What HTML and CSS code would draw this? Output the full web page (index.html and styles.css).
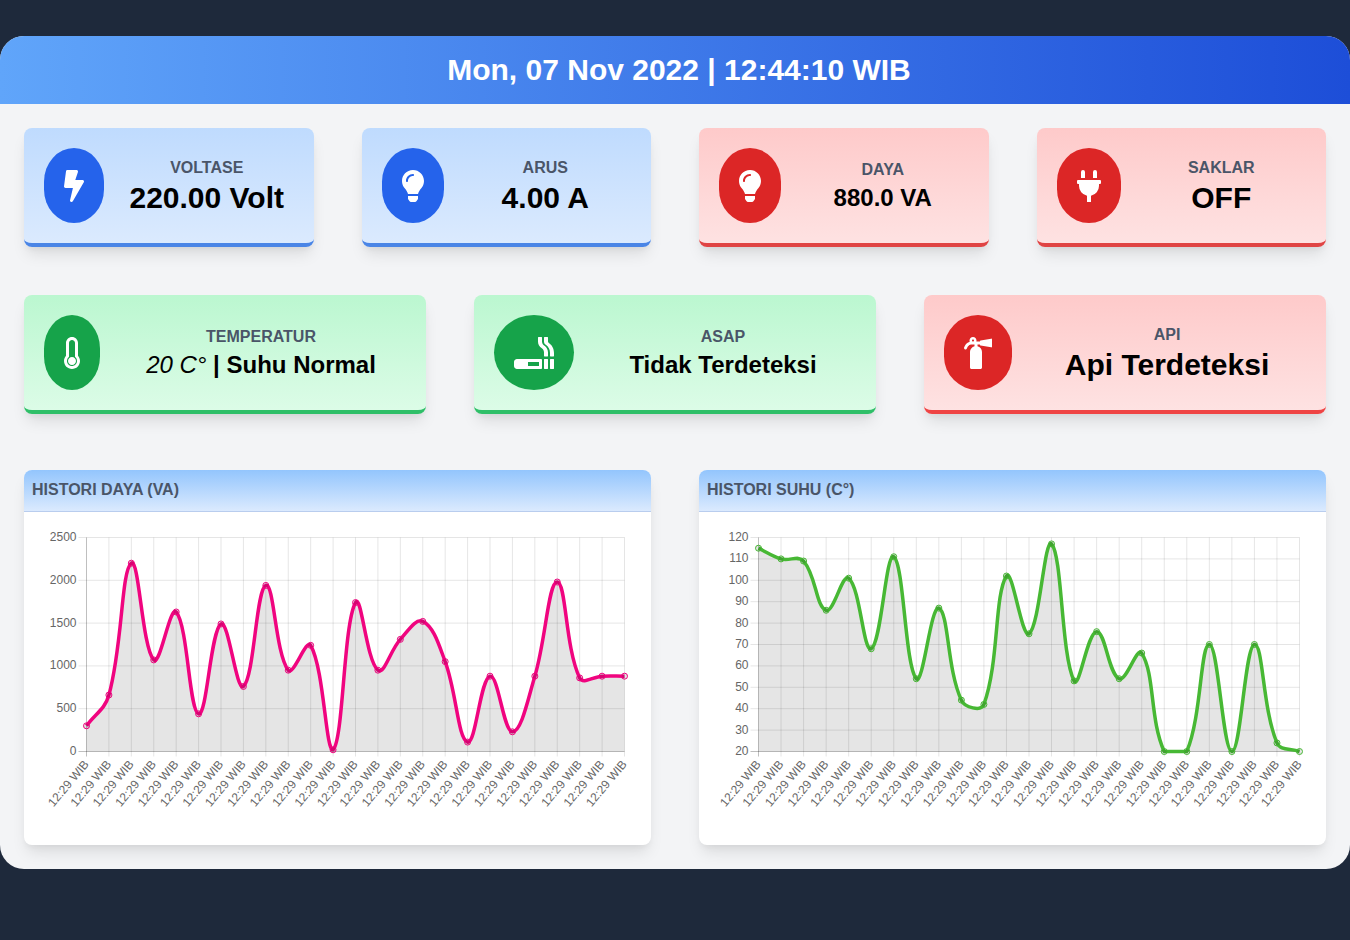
FILE: index.html
```html
<!DOCTYPE html>
<html lang="id">
<head>
    <meta charset="UTF-8">
    <meta name="viewport" content="width=device-width, initial-scale=1.0">
    <title>Monitoring Listrik</title>
    <link rel="stylesheet" href="styles.css">
</head>
<body>
    <div class="panel">
        <header class="topbar">Mon, 07 Nov 2022 | 12:44:10 WIB</header>
        <main class="content">
            <section class="row row-four">
                <div class="card card-blue">
                    <div class="icon icon-w60">
                        <svg viewBox="0 0 320 512" class="glyph"><path d="M296 160H180.6l42.6-129.8C227.2 15 215.7 0 200 0H56C44 0 33.8 8.9 32.2 20.8l-32 240C-1.7 275.2 9.5 288 24 288h118.7L96.6 482.5c-3.6 15.2 8 29.5 23.3 29.5 8.4 0 16.4-4.4 20.8-12l176-304c9.3-15.9-2.2-36-20.7-36z"/></svg>
                    </div>
                    <div class="info">
                        <h5 class="label">VOLTASE</h5>
                        <h3 class="value">220.00 Volt</h3>
                    </div>
                </div>
                <div class="card card-blue">
                    <div class="icon icon-w62">
                        <svg viewBox="0 0 352 512" class="glyph"><path d="M96.06 454.35c.01 6.29 1.87 12.45 5.36 17.69l17.09 25.69a31.99 31.99 0 0 0 26.64 14.28h61.71a31.99 31.99 0 0 0 26.64-14.28l17.09-25.69a31.989 31.989 0 0 0 5.36-17.69l.04-38.35H96.01l.05 38.35zM0 176c0 44.37 16.45 84.85 43.56 115.78 16.52 18.85 42.36 58.23 52.21 91.45.04.26.07.52.11.78h160.24c.04-.26.07-.51.11-.78 9.85-33.22 35.69-72.6 52.21-91.45C335.55 260.85 352 220.37 352 176 352 78.61 272.91-.3 175.45 0 73.44.31 0 82.97 0 176zm176-80c-44.11 0-80 35.89-80 80 0 8.84-7.16 16-16 16s-16-7.16-16-16c0-61.76 50.24-112 112-112 8.84 0 16 7.16 16 16s-7.16 16-16 16z"/></svg>
                    </div>
                    <div class="info">
                        <h5 class="label">ARUS</h5>
                        <h3 class="value">4.00 A</h3>
                    </div>
                </div>
                <div class="card card-red">
                    <div class="icon icon-w62">
                        <svg viewBox="0 0 352 512" class="glyph"><path d="M96.06 454.35c.01 6.29 1.87 12.45 5.36 17.69l17.09 25.69a31.99 31.99 0 0 0 26.64 14.28h61.71a31.99 31.99 0 0 0 26.64-14.28l17.09-25.69a31.989 31.989 0 0 0 5.36-17.69l.04-38.35H96.01l.05 38.35zM0 176c0 44.37 16.45 84.85 43.56 115.78 16.52 18.85 42.36 58.23 52.21 91.45.04.26.07.52.11.78h160.24c.04-.26.07-.51.11-.78 9.85-33.22 35.69-72.6 52.21-91.45C335.55 260.85 352 220.37 352 176 352 78.61 272.91-.3 175.45 0 73.44.31 0 82.97 0 176zm176-80c-44.11 0-80 35.89-80 80 0 8.84-7.16 16-16 16s-16-7.16-16-16c0-61.76 50.24-112 112-112 8.84 0 16 7.16 16 16s-7.16 16-16 16z"/></svg>
                    </div>
                    <div class="info">
                        <h5 class="label">DAYA</h5>
                        <h3 class="value value-sm">880.0 VA</h3>
                    </div>
                </div>
                <div class="card card-red">
                    <div class="icon icon-w64">
                        <svg viewBox="0 0 384 512" class="glyph"><path d="M320,32a32,32,0,0,0-64,0v96h64Zm48,128H16A16,16,0,0,0,0,176v32a16,16,0,0,0,16,16H32v32A160.07,160.07,0,0,0,160,412.8V512h64V412.8A160.07,160.07,0,0,0,352,256V224h16a16,16,0,0,0,16-16V176A16,16,0,0,0,368,160ZM128,32a32,32,0,0,0-64,0v96h64Z"/></svg>
                    </div>
                    <div class="info">
                        <h5 class="label">SAKLAR</h5>
                        <h3 class="value">OFF</h3>
                    </div>
                </div>
            </section>

            <section class="row row-three">
                <div class="card card-green">
                    <div class="icon icon-w56">
                        <svg viewBox="0 0 256 512" class="glyph"><path d="M192 384c0 35.346-28.654 64-64 64s-64-28.654-64-64 28.654-64 64-64 64 28.654 64 64zm32-84.653c19.912 22.563 32 52.194 32 84.653 0 70.696-57.303 128-128 128-.299 0-.609-.001-.909-.003C56.789 511.509-.357 453.636.002 383.333.166 351.135 12.225 321.755 32 299.347V96c0-53.019 42.981-96 96-96s96 42.981 96 96v203.347zM208 384c0-34.339-19.37-52.19-32-66.502V96c0-26.467-21.533-48-48-48S80 69.533 80 96v221.498c-12.732 14.428-31.825 32.1-31.999 66.08-.224 43.876 35.563 80.116 79.423 80.42L128 464c44.112 0 80-35.888 80-80z"/></svg>
                    </div>
                    <div class="info">
                        <h5 class="label">TEMPERATUR</h5>
                        <h3 class="value value-sm"><i class="value-temp">20 C°</i> | Suhu Normal</h3>
                    </div>
                </div>
                <div class="card card-green">
                    <div class="icon icon-w80">
                        <svg viewBox="0 0 640 512" class="glyph"><path d="M632 352h-48c-4.4 0-8 3.6-8 8v144c0 4.4 3.6 8 8 8h48c4.4 0 8-3.6 8-8V360c0-4.4-3.6-8-8-8zM553.3 87.1c-5.7-3.8-9.3-10-9.3-16.8V8c0-4.4-3.6-8-8-8h-48c-4.4 0-8 3.6-8 8v62.3c0 22 10.2 43.4 28.6 55.4 42.2 28.3 67.4 75.5 67.4 126.3V304c0 4.4 3.6 8 8 8h48c4.4 0 8-3.6 8-8v-48.3c0-69.7-34.5-134.5-92.7-168.6zM432 352H48c-26.5 0-48 21.5-48 48v64c0 26.5 21.5 48 48 48h384c8.8 0 16-7.2 16-16V368c0-8.8-7.2-16-16-16zm-32 112H224v-64h176v64zm87.7-322.4C463.8 125 448 99.3 448 70.3V8c0-4.4-3.6-8-8-8h-48c-4.4 0-8 3.6-8 8v66.4c0 43.7 24.6 81.6 60.3 106.7 22.4 15.7 35.7 41.2 35.7 68.6V304c0 4.4 3.6 8 8 8h48c4.4 0 8-3.6 8-8v-54.3c0-43.3-21-83.7-56.3-108.1zM536 352h-48c-4.4 0-8 3.6-8 8v144c0 4.4 3.6 8 8 8h48c4.4 0 8-3.6 8-8V360c0-4.4-3.6-8-8-8z"/></svg>
                    </div>
                    <div class="info">
                        <h5 class="label">ASAP</h5>
                        <h3 class="value value-sm">Tidak Terdeteksi</h3>
                    </div>
                </div>
                <div class="card card-fire">
                    <div class="icon icon-w68">
                        <svg viewBox="0 0 448 512" class="glyph"><path d="M434.027 26.329l-168 28C254.693 56.218 256 67.8 256 72h-58.332C208.353 36.108 181.446 0 144 0c-39.435 0-66.368 39.676-52.228 76.203-52.039 13.051-75.381 54.213-90.049 90.884-4.923 12.307 1.063 26.274 13.37 31.197 12.317 4.926 26.279-1.075 31.196-13.37C75.058 112.99 106.964 120 168 120v27.076c-41.543 10.862-72 49.235-72 94.129V488c0 13.255 10.745 24 24 24h144c13.255 0 24-10.745 24-24V240c0-44.731-30.596-82.312-72-92.97V120h40c0 2.974-1.703 15.716 10.027 17.671l168 28C441.342 169.531 448 163.33 448 156V38c0-7.33-6.658-13.531-13.973-11.671zM144 72c-8.822 0-16-7.178-16-16s7.178-16 16-16 16 7.178 16 16-7.178 16-16 16z"/></svg>
                    </div>
                    <div class="info">
                        <h5 class="label">API</h5>
                        <h3 class="value">Api Terdeteksi</h3>
                    </div>
                </div>
            </section>

            <section class="row row-two">
                <div class="chart-card">
                    <h5 class="chart-title">HISTORI DAYA (VA)</h5>
                    <div class="chart-body" id="chartDaya"></div>
                </div>
                <div class="chart-card">
                    <h5 class="chart-title">HISTORI SUHU (C°)</h5>
                    <div class="chart-body" id="chartSuhu"></div>
                </div>
            </section>
        </main>
    </div>

    <script src="charts.js"></script>
</body>
</html>
```

FILE: styles.css
```css
* { box-sizing: border-box; }
body { margin: 0; padding-top: 36px; height: 940px; overflow: hidden; background-color: #1e293b; font-family: "Liberation Sans", Arial, sans-serif; }
h3, h5 { margin: 0; }

.panel { background-color: #f3f4f6; border-radius: 24px; overflow: hidden; height: 833px; }
.topbar { height: 68px; padding-left: 8px; display: flex; align-items: center; justify-content: center; background: linear-gradient(to right, #60a5fa, #1d4ed8); color: #fff; font-size: 30px; font-weight: bold; }
.content { padding: 24px; }

.row { display: grid; column-gap: 48px; }
.row-four { grid-template-columns: repeat(4, 1fr); margin-bottom: 48px; }
.row-three { grid-template-columns: repeat(3, 1fr); margin-bottom: 56px; }
.row-two { grid-template-columns: repeat(2, 1fr); }

.card { display: flex; align-items: center; height: 119px; padding: 20px; border-radius: 8px; border-bottom: 4px solid; box-shadow: 0 10px 15px -3px rgba(0,0,0,.1), 0 4px 6px -2px rgba(0,0,0,.05); }
.card-blue { background: linear-gradient(to bottom, #bfdbfe, #dbeafe); border-color: #4a85e6; }
.card-red { background: linear-gradient(to bottom, #fecaca, #fee2e2); border-color: #e04444; }
.card-fire { background: linear-gradient(to bottom, #fecaca, #fee2e2); border-color: #ef4444; }
.card-green { background: linear-gradient(to bottom, #bbf7d0, #dcfce7); border-color: #2fbf68; }

.icon { flex-shrink: 0; height: 75px; border-radius: 50% / 45%; display: flex; align-items: center; justify-content: center; }
.card-blue .icon { background-color: #2563eb; }
.card-red .icon, .card-fire .icon { background-color: #dc2626; }
.card-green .icon { background-color: #16a34a; }
.icon-w56 { width: 56px; }
.icon-w60 { width: 60px; }
.icon-w62 { width: 62px; }
.icon-w64 { width: 64px; }
.icon-w68 { width: 68px; }
.icon-w80 { width: 80px; border-radius: 50%; }
.glyph { height: 32px; fill: #fff; display: block; }

.info { flex: 1; margin-left: 16px; text-align: center; }
.label { font-size: 16px; line-height: 24px; font-weight: bold; color: #4a5568; }
.value { font-size: 30px; line-height: 36px; font-weight: bold; color: #000; }
.value-sm { font-size: 24px; line-height: 32px; }
.value-temp { font-weight: normal; }

.chart-card { height: 375px; background-color: #fff; border-radius: 8px; box-shadow: 0 10px 15px -3px rgba(0,0,0,.1), 0 4px 6px -2px rgba(0,0,0,.05); overflow: hidden; }
.chart-title { height: 42px; padding: 0 8px 2px; display: flex; align-items: center; background: linear-gradient(to bottom, #93c5fd, #dbeafe); border-bottom: 1px solid #b9cdee; font-size: 16px; font-weight: bold; color: #4a5568; }
.chart-body { height: 333px; }
.chart-body svg { display: block; }

.grid-line { stroke: rgba(0,0,0,.1); stroke-width: 1; }
.axis-line { stroke: rgba(0,0,0,.25); stroke-width: 1; }
.tick-text { font-family: "Liberation Sans", Arial, sans-serif; font-size: 12px; fill: #666; }
.area { fill: rgba(0,0,0,.1); stroke: none; }
.curve { fill: none; stroke-width: 3.5; stroke-linejoin: round; }
.dot { fill: rgba(0,0,0,.1); stroke-width: 1; }
```

FILE: charts.js
```javascript
// Histori charts, same curve maths as a tension 0.4 line chart
const labelText = "12:29 WIB";

const daya = [300, 660, 2200, 1070, 1630, 440, 1490, 760, 1940, 950, 1240, 20, 1740, 950, 1310, 1520, 1050, 110, 880, 230, 880, 1980, 860, 880, 880];
const suhu = [115, 110, 109, 86, 101, 68, 111, 54, 87, 44, 42, 102, 75, 117, 53, 76, 54, 66, 20, 20, 70, 20, 70, 24, 20];

function el(name, attrs, parent) {
    const node = document.createElementNS("http://www.w3.org/2000/svg", name);
    for (const key in attrs) node.setAttribute(key, attrs[key]);
    parent.appendChild(node);
    return node;
}

function curvePath(pts, top, bottom) {
    const clampY = (y) => Math.min(bottom, Math.max(top, y));
    const ctrl = pts.map((cur, i) => {
        const prev = pts[i - 1] || cur;
        const next = pts[i + 1] || cur;
        const d01 = Math.hypot(cur.x - prev.x, cur.y - prev.y);
        const d12 = Math.hypot(next.x - cur.x, next.y - cur.y);
        const sum = d01 + d12 || 1;
        const fa = 0.4 * d01 / sum;
        const fb = 0.4 * d12 / sum;
        return {
            x1: cur.x - fa * (next.x - prev.x),
            y1: clampY(cur.y - fa * (next.y - prev.y)),
            x2: cur.x + fb * (next.x - prev.x),
            y2: clampY(cur.y + fb * (next.y - prev.y))
        };
    });
    let d = `M${pts[0].x} ${pts[0].y}`;
    for (let i = 1; i < pts.length; i++) {
        d += `C${ctrl[i - 1].x2} ${ctrl[i - 1].y2} ${ctrl[i].x1} ${ctrl[i].y1} ${pts[i].x} ${pts[i].y}`;
    }
    return d;
}

function drawChart(id, cfg) {
    const svg = el("svg", { width: 627, height: 333, viewBox: "0 0 627 333" }, document.getElementById(id));
    const top = 25.5, bottom = 239.5, right = 600.5, left = cfg.left + 0.5;
    const stepX = (right - left) / (cfg.data.length - 1);
    const toY = (v) => bottom - (v - cfg.min) / (cfg.max - cfg.min) * (bottom - top);

    // horizontal grid and y ticks
    for (let v = cfg.min; v <= cfg.max; v += cfg.step) {
        const y = toY(v);
        el("line", { x1: left - 8, x2: right, y1: y, y2: y, class: v === cfg.min ? "axis-line" : "grid-line" }, svg);
        const t = el("text", { x: left - 10, y: y + 3.5, "text-anchor": "end", class: "tick-text" }, svg);
        t.textContent = v;
    }

    // vertical grid and x labels
    cfg.data.forEach((v, i) => {
        const x = left + stepX * i;
        el("line", { x1: x, x2: x, y1: top, y2: bottom + 5, class: i === 0 ? "axis-line" : "grid-line" }, svg);
        const t = el("text", {
            transform: `translate(${x + 3} ${bottom + 13}) rotate(-50)`,
            "text-anchor": "end",
            class: "tick-text"
        }, svg);
        t.textContent = labelText;
    });

    const pts = cfg.data.map((v, i) => ({ x: left + stepX * i, y: toY(v) }));
    const line = curvePath(pts, top, bottom);
    el("path", { d: `${line}L${right} ${bottom}L${left} ${bottom}Z`, class: "area" }, svg);
    el("path", { d: line, class: "curve", stroke: cfg.color }, svg);
    pts.forEach((p) => {
        el("circle", { cx: p.x, cy: p.y, r: 3, class: "dot", stroke: cfg.color }, svg);
    });
}

drawChart("chartDaya", { data: daya, min: 0, max: 2500, step: 500, left: 62, color: "#f0047f" });
drawChart("chartSuhu", { data: suhu, min: 20, max: 120, step: 10, left: 59, color: "#47b834" });
```
